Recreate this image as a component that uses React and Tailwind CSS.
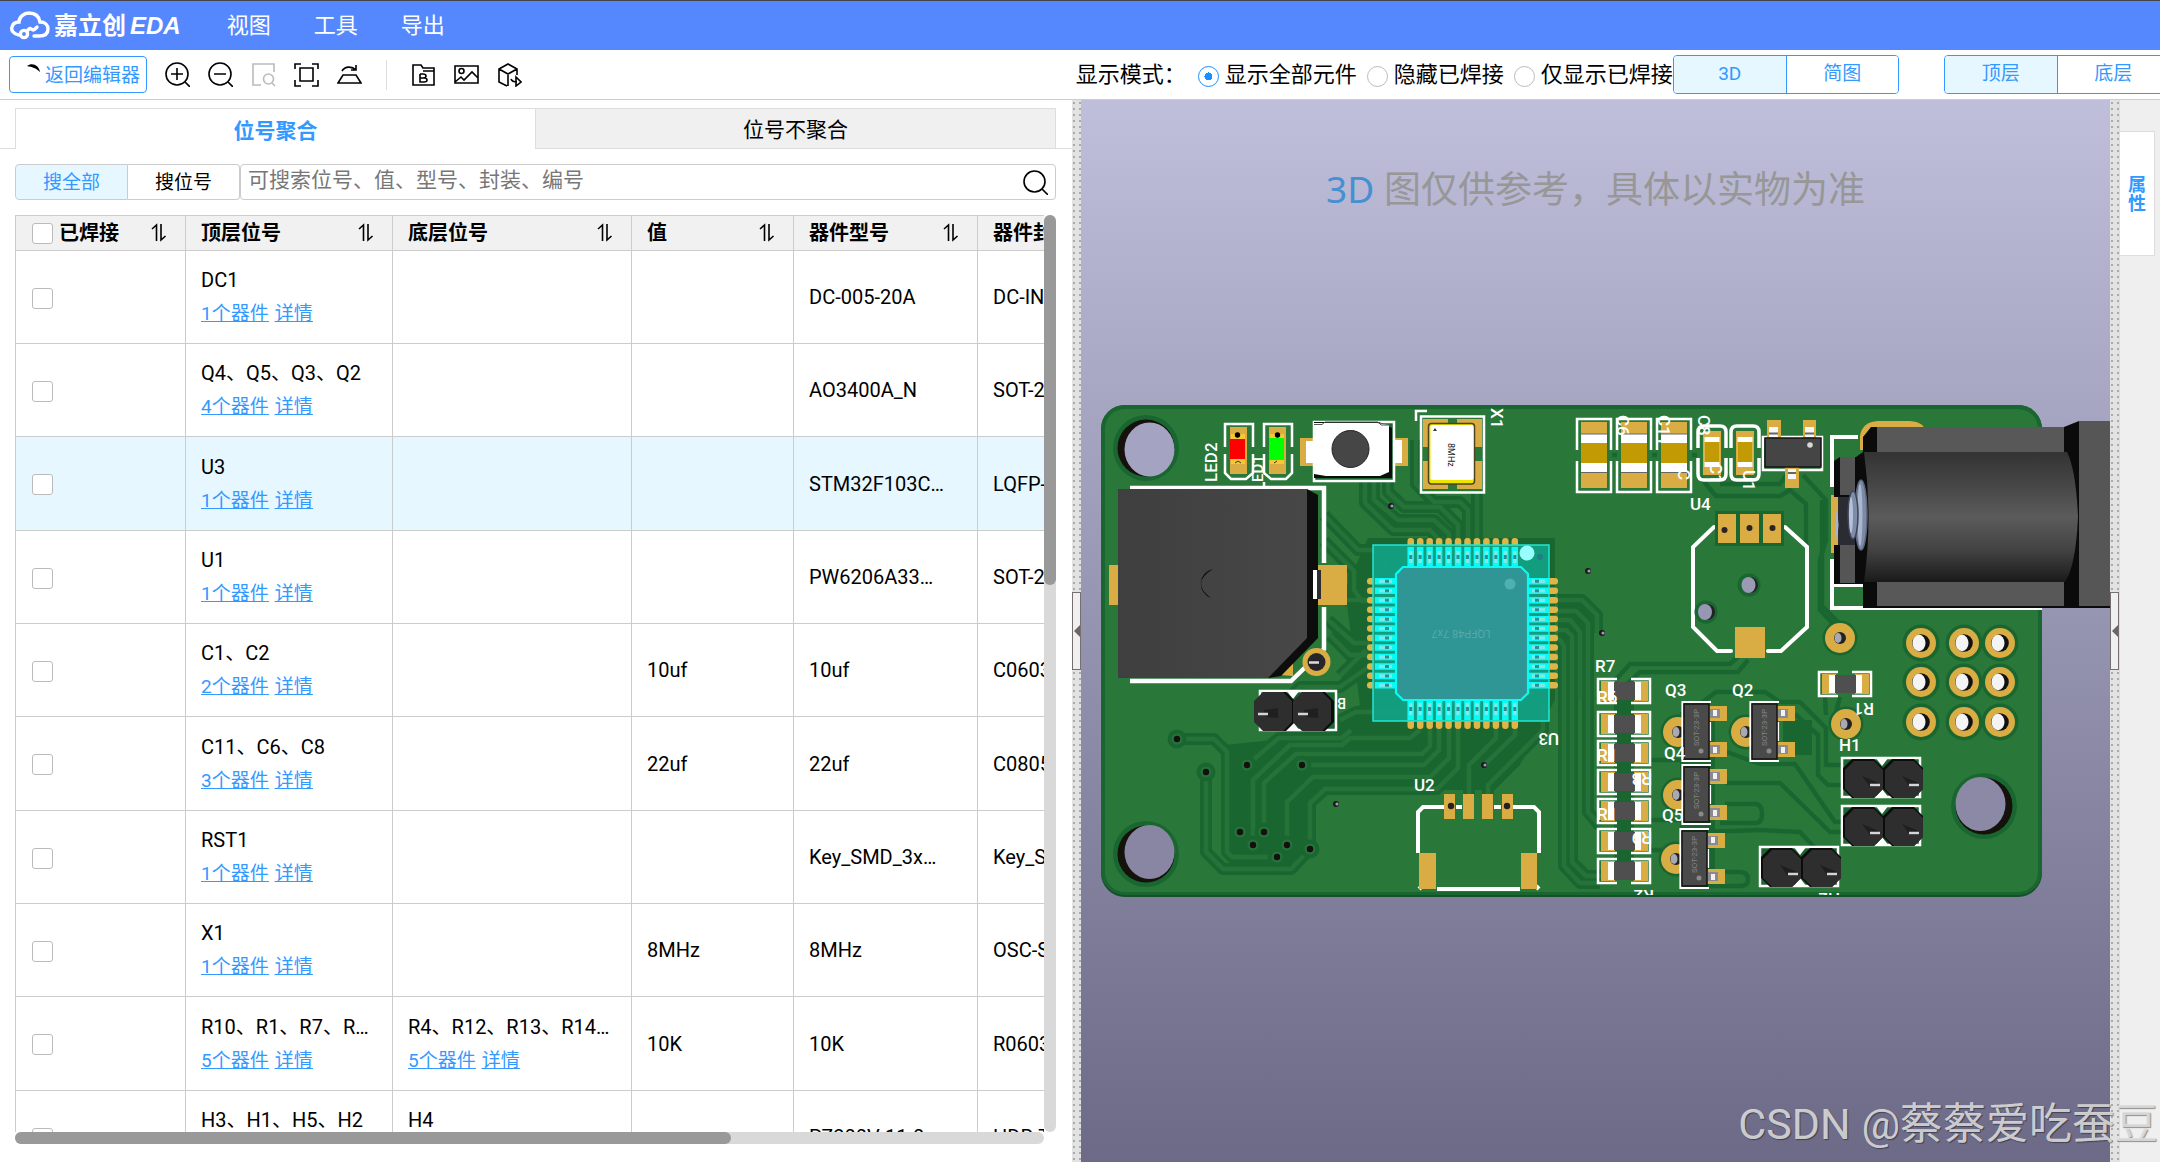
import React, { useState } from 'react';

const GOLD = '#d9ad43';
const DARK = '#1a6630';
const SILK = '#ffffff';

const rows = [
    { top: 'DC1', topCount: 1, value: '', model: 'DC-005-20A', pack: 'DC-IN-TH' },
    { top: 'Q4、Q5、Q3、Q2', topCount: 4, value: '', model: 'AO3400A_N', pack: 'SOT-23-3' },
    { top: 'U3', topCount: 1, value: '', model: 'STM32F103C…', pack: 'LQFP-48', active: true },
    { top: 'U1', topCount: 1, value: '', model: 'PW6206A33…', pack: 'SOT-23-3' },
    { top: 'C1、C2', topCount: 2, value: '10uf', model: '10uf', pack: 'C0603' },
    { top: 'C11、C6、C8', topCount: 3, value: '22uf', model: '22uf', pack: 'C0805' },
    { top: 'RST1', topCount: 1, value: '', model: 'Key_SMD_3x…', pack: 'Key_SMD' },
    { top: 'X1', topCount: 1, value: '8MHz', model: '8MHz', pack: 'OSC-SMD' },
    { top: 'R10、R1、R7、R…', topCount: 5, bottom: 'R4、R12、R13、R14…', bottomCount: 5, value: '10K', model: '10K', pack: 'R0603' },
    { top: 'H3、H1、H5、H2', topCount: 4, bottom: 'H4', bottomCount: 1, value: '', model: 'PZ200V-11-0…', pack: 'HDR-TH' },
];

const columns = ['顶层位号', '底层位号', '值', '器件型号', '器件封装'];

const Icon = ({ children, className = '' }) => (
    <svg viewBox="0 0 25 25" className={`size-[25px] ${className}`} fill="none" stroke="currentColor" strokeWidth="1.6" aria-hidden="true">
        {children}
    </svg>
);

const Logo = () => (
    <a href="#home" className="flex items-center gap-1 text-white">
        <svg viewBox="0 0 40 30" className="h-[30px] w-10" fill="none" stroke="white" strokeWidth="3.4" strokeLinecap="round" aria-hidden="true">
            <path d="M9 24 C3 23 1 19 2 16 C3 12 6 11 9 11 C9 6 14 2 19 2 C25 2 29 5 30 11 C35 11 38 14 38 18 C38 23 34 25 29 25 L24 25" />
            <circle cx="14" cy="23" r="3.6" />
            <path d="M17 20 L19 18 C21 16 22 21 25 18 L27 16" />
        </svg>
        <span className="text-[24px] leading-8 font-bold">
            嘉立创<span className="ml-1 font-['Liberation_Sans'] italic">EDA</span>
        </span>
    </a>
);

const Header = () => (
    <header className="flex h-[50px] shrink-0 items-center border-t border-[#444] bg-[#5588ff] pl-2.5">
        <Logo />
        <nav className="ml-[46px] flex gap-[43px] text-[22px] text-white">
            <a href="#view">视图</a>
            <a href="#tools">工具</a>
            <a href="#export">导出</a>
        </nav>
    </header>
);

const Segmented = ({ label, options, value, onChange }) => (
    <div role="group" aria-label={label} className="flex h-[39px] shrink-0 overflow-hidden rounded border border-[#3399ff] text-[19px] text-[#3399ff]">
        {options.map((option) => (
            <button
                key={option}
                type="button"
                onClick={() => onChange(option)}
                className={`w-28 border-l border-[#3399ff] first:border-l-0 ${option === value ? 'bg-[#e6f7ff]' : 'bg-white'}`}
            >
                {option}
            </button>
        ))}
    </div>
);

const Toolbar = () => {
    const [mode, setMode] = useState('显示全部元件');
    const [view, setView] = useState('3D');
    const [layer, setLayer] = useState('顶层');

    return (
        <div className="flex h-[50px] shrink-0 items-center overflow-hidden border-b border-[#ccc] bg-white">
            <div className="flex w-[49.8%] shrink-0 items-center gap-[18px] pl-[9px]">
                <button type="button" className="flex h-[37px] w-[138px] items-center justify-end rounded border border-[#3399ff] pt-1 pr-1.5 text-[19px] whitespace-nowrap text-[#3399ff]">
                    <svg viewBox="0 0 14 14" className="mr-1 size-3.5 shrink-0 -translate-y-2" fill="black" aria-hidden="true">
                        <path d="M0 4 C5 0 12 3 13 10 C9 6 5 5 0 4 Z" />
                    </svg>
                    返回编辑器
                </button>
                <button type="button" aria-label="放大">
                    <Icon><circle cx="12" cy="12" r="11" /><path d="M12 6v12M6 12h12M20 20l5 5" /></Icon>
                </button>
                <button type="button" aria-label="缩小">
                    <Icon><circle cx="12" cy="12" r="11" /><path d="M6 12h12M20 20l5 5" /></Icon>
                </button>
                <button type="button" aria-label="框选缩放" disabled>
                    <Icon className="text-[#bbb]"><path d="M10 23H2V2h21v8" /><circle cx="17.500" cy="17" r="5" /><path d="M21 21l3 3" /></Icon>
                </button>
                <button type="button" aria-label="适应全部">
                    <Icon><path d="M1 7V2h6M18 2h6v5M24 18v6h-6M7 24H1v-6M6 6h13v13H6z" /></Icon>
                </button>
                <button type="button" aria-label="翻转">
                    <Icon><path d="M6 13h13l5 8H1zM5 9c3-5 10-5 14-1M19 3v5h-5" /></Icon>
                </button>
                <span className="mx-1.5 h-[30px] w-px bg-[#ddd]" />
                <button type="button" aria-label="导出BOM">
                    <Icon><path d="M2 23V3h8l2 3h11v17zM12 9h11M9 12v8h4q3 0 3-2t-3-2H9m0-4h3q3 0 3 2t-3 2" /></Icon>
                </button>
                <button type="button" aria-label="导出图片">
                    <Icon><path d="M1 4h23v17H1zM1 20l6-5 3 3 8-8 6 6" /><circle cx="7.500" cy="9" r="2.500" /></Icon>
                </button>
                <button type="button" aria-label="导出3D">
                    <Icon><path d="M10 24l-8-4V7l9-5 9 5v6M2 7l9 5 9-5M11 12v12M14 17q1 3 6 3M19 15l5 5-5 4z" /></Icon>
                </button>
            </div>
            <fieldset className="flex shrink-0 items-center text-[22px] whitespace-nowrap text-black">
                <legend className="float-left mr-3">显示模式：</legend>
                {['显示全部元件', '隐藏已焊接', '仅显示已焊接'].map((item) => (
                    <label key={item} className="flex items-center gap-1.5 pr-2.5 last:pr-0">
                        <input
                            type="radio"
                            name="mode"
                            checked={mode === item}
                            onChange={() => setMode(item)}
                            className="mt-1 size-[21px] appearance-none rounded-full border border-[#bbb] bg-white checked:border-[#1890ff] checked:bg-[radial-gradient(circle,#1890ff_4px,white_4px)]"
                        />
                        {item}
                    </label>
                ))}
            </fieldset>
            <div className="flex shrink-0 gap-[45px]">
                <Segmented label="视图" options={['3D', '简图']} value={view} onChange={setView} />
                <Segmented label="层" options={['顶层', '底层']} value={layer} onChange={setLayer} />
            </div>
        </div>
    );
};

const SortButton = ({ label }) => (
    <button type="button" aria-label={`${label}排序`} className="mr-[18px]">
        <svg viewBox="0 0 16 20" className="h-5 w-4" fill="none" stroke="black" strokeWidth="1.6" aria-hidden="true">
            <path d="M1 6L5.500 2V18M10 1V17L14.500 13" />
        </svg>
    </button>
);

const checkbox = 'size-[21px] shrink-0 appearance-none rounded-[3px] border border-[#bbb] bg-white checked:bg-[#3399ff]';

const PartCell = ({ names, count }) => (
    <td className="border border-[#ccc] py-0 pl-[15px] align-middle whitespace-nowrap">
        {names && (
            <>
                <div className="leading-[34px]">{names}</div>
                <div className="flex gap-1.5 text-[19px] leading-[34px] text-[#3399ff] underline">
                    <a href="#parts">{count}个器件</a>
                    <a href="#detail">详情</a>
                </div>
            </>
        )}
    </td>
);

const PartsTable = () => (
    <table className="w-[1163px] table-fixed border-collapse text-[20px] text-black">
        <colgroup>
            <col className="w-[170px]" />
            <col className="w-[207px]" />
            <col className="w-[239px]" />
            <col className="w-[162px]" />
            <col className="w-[184px]" />
            <col className="w-[200px]" />
        </colgroup>
        <thead>
            <tr className="h-[35px] bg-[#f1f1f1] text-left font-bold">
                <th className="border border-[#ccc] py-0">
                    <div className="flex items-center pl-4">
                        <label className="flex flex-1 items-center gap-1.5">
                            <input type="checkbox" className={checkbox} />
                            已焊接
                        </label>
                        <SortButton label="已焊接" />
                    </div>
                </th>
                {columns.map((name) => (
                    <th key={name} className="border border-[#ccc] py-0">
                        <div className="flex items-center justify-between pl-[15px]">
                            {name}
                            <SortButton label={name} />
                        </div>
                    </th>
                ))}
            </tr>
        </thead>
        <tbody>
            {rows.map((row) => (
                <tr key={row.top} className={`h-[93px] nth-[3n]:h-[94px] ${row.active ? 'bg-[#e6f7ff]' : 'bg-white'}`}>
                    <td className="border border-[#ccc] py-0 pl-4 align-middle">
                        <input type="checkbox" aria-label={`${row.top} 已焊接`} className={`${checkbox} mt-0.5 block`} />
                    </td>
                    <PartCell names={row.top} count={row.topCount} />
                    <PartCell names={row.bottom} count={row.bottomCount} />
                    <td className="border border-[#ccc] py-0 pl-[15px]">{row.value}</td>
                    <td className="border border-[#ccc] py-0 pl-[15px] whitespace-nowrap">{row.model}</td>
                    <td className="border border-[#ccc] py-0 pl-[15px] whitespace-nowrap">{row.pack}</td>
                </tr>
            ))}
        </tbody>
    </table>
);

const PartsPanel = () => (
    <section className="flex w-[49.63%] shrink-0 flex-col bg-white pt-2">
        <div role="tablist" className="flex h-[41px] shrink-0 text-[21px]">
            <span className="w-[15px] border-b border-[#ddd]" />
            <button type="button" role="tab" aria-selected="true" className="flex-1 border-t border-l border-[#ddd] pt-1.5 font-bold text-[#3399ff]">
                位号聚合
            </button>
            <button type="button" role="tab" aria-selected="false" className="flex-1 border border-[#ddd] bg-[#f0f0f0] pt-1 text-black">
                位号不聚合
            </button>
            <span className="w-4 border-b border-[#ddd]" />
        </div>
        <div className="mt-[15px] mr-4 ml-[15px] flex h-9 shrink-0 text-[19px]">
            <button type="button" className="w-[113px] rounded-l border border-[#ccc] bg-[#e6f7ff] pt-0.5 text-[#3399ff]">搜全部</button>
            <button type="button" className="w-[112px] rounded-r border border-l-0 border-[#ccc] pt-0.5 text-black">搜位号</button>
            <div className="flex flex-1 items-center rounded border border-[#ccc] pr-[7px] pl-[7px]">
                <input
                    type="text"
                    aria-label="搜索"
                    placeholder="可搜索位号、值、型号、封装、编号"
                    className="flex-1 pb-0.5 text-[21px] placeholder:text-[#777] focus:outline-none"
                />
                <button type="button" aria-label="搜索">
                    <Icon className="text-black"><circle cx="11.500" cy="11.500" r="10.500" /><path d="M19 19l6 6" /></Icon>
                </button>
            </div>
        </div>
        <div className="mt-[15px] mr-4 mb-[18px] ml-[15px] flex min-h-0 flex-1 flex-col">
            <div className="flex min-h-0 flex-1">
                <div className="min-w-0 flex-1 overflow-hidden">
                    <PartsTable />
                </div>
                <div className="w-3 shrink-0 rounded-full bg-[#d9d9d9]">
                    <div className="h-[40.4%] rounded-full bg-[#999]" />
                </div>
            </div>
            <div className="mr-3 h-3 shrink-0 rounded-full bg-[#d9d9d9]">
                <div className="h-full w-[69.6%] rounded-full bg-[#999]" />
            </div>
        </div>
    </section>
);

const Splitter = () => (
    <div className="flex w-[9px] shrink-0 items-center bg-[#e2e2e2] bg-[radial-gradient(#aaa_1px,transparent_1px)] bg-[length:6px_6px] bg-[position:-1px_0]">
        <button type="button" aria-label="折叠面板" className="flex h-[78px] w-full items-center justify-center border border-[#776f6f] bg-[#f0f0f0]">
            <svg viewBox="0 0 6 12" className="h-3 w-1.5" fill="#6f6464" aria-hidden="true"><path d="M6 0V12L0 6Z" /></svg>
        </button>
    </div>
);

// x, y, width, height
const Pads = ({ list, fill = GOLD }) => list.map(([x, y, w, h]) => (
    <rect key={`${x}-${y}`} x={x} y={y} width={w} height={h} fill={fill} />
));

const Ring = ({ x, y, hole = '#f4f4f4' }) => (
    <g>
        <circle cx={x} cy={y} r="18.500" fill={DARK} />
        <circle cx={x} cy={y} r="15" fill={GOLD} />
        <circle cx={x} cy={y} r="8.800" fill="#111" />
        <ellipse cx={x - 2} cy={y} rx="6.500" ry="8.300" fill={hole} />
    </g>
);

const SmallRing = ({ x, y }) => (
    <g>
        <circle cx={x} cy={y} r="17.500" fill={DARK} />
        <circle cx={x} cy={y} r="15" fill={GOLD} />
        <circle cx={x} cy={y} r="6" fill="#222" />
        <ellipse cx={x - 2} cy={y} rx="3.500" ry="5" fill="#a9a9b4" />
    </g>
);

const MountHole = ({ x, y, shift, tilt, fill }) => (
    <g>
        <circle cx={x} cy={y} r="33" fill={DARK} />
        <circle cx={x} cy={y} r="28.500" fill="#15110b" />
        <ellipse cx={x + shift} cy={y + tilt} rx="25" ry="27" fill={fill} />
    </g>
);

const Cap = ({ x }) => (
    <g>
        <path d={`M${x + 1} 450V419H${x + 35}V450M${x + 1} 461V492H${x + 35}V461`} fill="none" stroke={SILK} strokeWidth="2.500" />
        <rect x={x + 5} y="422" width="26" height="66" fill={GOLD} />
        <rect x={x + 5} y="434" width="26" height="38" fill="white" />
        <rect x={x + 5} y="443" width="26" height="20" fill="#c29a04" />
        <path d={`M${x + 5} 472.500H${x + 31}M${x + 5} 434H${x + 31}`} stroke="#666" strokeWidth="1.200" />
    </g>
);

const SmallCap = ({ x }) => (
    <g>
        <path d={`M${x + 1} 448V432Q${x + 1} 426 ${x + 7} 426H${x + 23}Q${x + 29} 426 ${x + 29} 432V448M${x + 1} 458V474Q${x + 1} 480 ${x + 7} 480H${x + 23}Q${x + 29} 480 ${x + 29} 474V458`} fill="none" stroke={SILK} strokeWidth="3.500" />
        <rect x={x + 6} y="431" width="18" height="44" fill={GOLD} />
        <rect x={x + 7.5} y="437" width="15" height="30" fill="white" />
        <rect x={x + 7.5} y="442" width="15" height="20" fill="#c29a04" />
    </g>
);

const Resistor = ({ x, y }) => (
    <g>
        <path d={`M${x + 20} ${y + 1}H${x + 1}V${y + 25}H${x + 20}M${x + 34} ${y + 1}H${x + 53}V${y + 25}H${x + 34}`} fill="none" stroke={SILK} strokeWidth="2.500" />
        <rect x={x + 4} y={y + 3} width="14" height="20" fill={GOLD} />
        <rect x={x + 37} y={y + 3} width="14" height="20" fill={GOLD} />
        <rect x={x + 11} y={y + 4} width="33" height="18" fill="white" />
        <rect x={x + 17} y={y + 4} width="21" height="18" fill="#4f4f4f" />
    </g>
);

const Mosfet = ({ x, y }) => (
    <g>
        <SmallRing x={x - 6} y={y + 28} />
        <rect x={x + 25} y={y + 2} width="18" height="15" fill={GOLD} />
        <rect x={x + 25} y={y + 38} width="18" height="15" fill={GOLD} />
        <path d={`M${x + 27} ${y - 2}H${x - 1.500}V${y + 57}H${x + 27}M${x + 26} ${y + 18}V${y + 37}`} fill="none" stroke={SILK} strokeWidth="2.200" />
        <rect x={x + 26} y={y + 5} width="10" height="9" fill="#8a8a92" />
        <rect x={x + 29} y={y + 6} width="4" height="6" fill="#f2f2f2" />
        <rect x={x + 26} y={y + 41} width="10" height="9" fill="#8a8a92" />
        <rect x={x + 29} y={y + 43} width="4" height="6" fill="#f2f2f2" />
        <rect x={x} y={y} width="25" height="55" fill="#4a4a4a" stroke="#161616" strokeWidth="1.600" />
        <circle cx={x + 17} cy={y + 47} r="2.500" fill="#8a8a8a" />
        <text x={x + 15} y={y + 42} transform={`rotate(-90 ${x + 15} ${y + 42})`} fontSize="8" fill="#858585">SOT-23-3P</text>
    </g>
);

const octagon = (x, y, w, h) => `M${x + 9} ${y}H${x + w - 9}L${x + w} ${y + 9}V${y + h - 9}L${x + w - 9} ${y + h}H${x + 9}L${x} ${y + h - 9}V${y + 9}Z`;

const PinHeader = ({ x, y }) => (
    <g>
        <rect x={x + 1} y={y + 1} width="78" height="39" fill={DARK} stroke={SILK} strokeWidth="2.500" />
        <path d={`M${x + 34} ${y}h14l-7 9zM${x + 34} ${y + 41}h14l-7 -9z`} fill="white" />
        <path d={octagon(x + 2, y + 2, 40, 39)} fill="#0c0c0c" />
        <path d={octagon(x + 42, y + 2, 40, 39)} fill="#0c0c0c" />
        <path d={octagon(x + 4, y + 4, 38, 37)} fill="#2e2e2e" />
        <path d={octagon(x + 44, y + 4, 38, 37)} fill="#2e2e2e" />
        <path d={`M${x + 21} ${y + 19}l17 7v4h-9zM${x + 61} ${y + 19}l17 7v4h-9z`} fill="#1f1f1f" />
        <path d={`M${x + 29} ${y + 28}h10M${x + 68} ${y + 28}h10`} stroke="#d5d5d5" strokeWidth="2.500" />
    </g>
);

const routes = [
    'M1177 739H1214L1227 752V852L1232 857H1277',
    'M1206 772V852L1223 869H1291L1310 849V803L1325 789H1437L1458 768V728',
    'M1247 765L1279 738H1342L1351 730',
    'M1253 845V780L1290 745H1342L1350 738H1410L1420 730',
    'M1264 832V783L1296 754H1422L1430 746V728',
    'M1302 765H1424L1439 750V728',
    'M1287 845V802L1313 777H1430L1449 758V728',
    'M1469 794V765L1496 738V728',
    'M1484 765L1515 735V728',
    'M1488 794V785L1543 730V700',
    'M1365 482V503L1393 530H1430L1439 540',
    'M1374 482V500L1398 520H1434L1449 534V540',
    'M1388 482V492L1404 507H1440L1458 525V540',
    'M1416 440V484L1434 502H1460L1468 510V540',
    'M1477 489V540',
    'M1324 515L1358 550H1372L1388 566',
    'M1324 541L1354 571V590L1362 601H1370',
    'M1345 600H1370',
    'M1328 620L1354 643H1370',
    'M1330 635L1350 655H1370',
    'M1340 676L1366 650',
    'M1290 697L1300 687H1340L1370 666',
    'M1340 720L1356 712H1400',
    'M1558 600H1582L1597 615V633',
    'M1558 611H1576L1588 623V655',
    'M1558 620H1570L1580 632V700',
    'M1558 630H1566L1572 636V862L1586 876H1610',
    'M1558 640H1560L1564 646V866L1580 883H1600',
    'M1588 655V812L1600 826',
];

const grooves = [
    'M1597 700L1630 664H1730L1740 655',
    'M1610 700L1640 672H1738L1748 660',
    'M1700 477L1716 496H1780L1790 490L1806 504V545',
    'M1720 484H1780L1790 470',
    'M1822 500L1822 606L1850 634',
    'M1803 475L1826 500V540L1820 560V610L1835 626',
    'M1700 704L1716 692H1765L1780 702H1800L1826 728V765H1845',
    'M1795 714L1818 735V775L1828 785H1845',
    'M1727 752L1760 764H1795L1835 822H1845',
    'M1725 783H1780L1830 832H1845',
    'M1725 804H1755Q1762 804 1762 814Q1762 823 1755 823H1720',
    'M1700 832L1760 830L1800 832L1815 848',
    'M1706 872H1740Q1748 872 1748 880Q1748 886 1740 886H1700',
    'M1825 697L1826 715M1840 697L1836 712',
    'M1612 455H1617M1652 455H1657M1692 455H1697',
    'M1650 760H1690M1650 820H1690M1650 850H1680',
];

const vias = [
    [1177, 739], [1206, 772], [1247, 765], [1302, 765], [1240, 832], [1264, 832], [1253, 845],
    [1287, 845], [1277, 857], [1310, 849],
];

// drill holes without a trace on this layer
const drills = [[1336, 804], [1484, 765], [1391, 506], [1588, 571], [1602, 633]];

const pins = Array.from({ length: 12 }, (_, i) => i * 9.46);

const Mcu = () => (
    <g>
        {pins.map((p) => (
            <g key={p} fill="#dfb548">
                <rect x={1407.5 + p} y="538" width="6.500" height="191" rx="3" />
                <rect x="1367" y={578 + p} width="191" height="6.500" rx="3" />
            </g>
        ))}
        <rect x="1373" y="545" width="176" height="176" fill="#12a184" fillOpacity="0.93" stroke="#1fe8d8" strokeWidth="1.500" />
        {pins.map((p) => (
            <g key={p}>
                <path d={`M${1410.7 + p} 547V568M${1410.7 + p} 699V720M1375 ${581.3 + p}H1396M1528 ${581.3 + p}H1549`} stroke="#08fbf5" strokeWidth="6.500" />
                <path d={`M${1410.7 + p} 551V563M${1410.7 + p} 703V715M1379 ${581.3 + p}H1392M1532 ${581.3 + p}H1545`} stroke="#7aeaea" strokeWidth="3.500" />
                <path d={`M${1410.7 + p} 555V559M${1410.7 + p} 707V711M1385 ${581.3 + p}H1389M1535 ${581.3 + p}H1539`} stroke="#2b8f98" strokeWidth="3" />
            </g>
        ))}
        <path d="M1403 567H1521L1528 574V693L1521 700H1403L1396 693V574Z" fill="#309595" stroke="#08fbf5" strokeWidth="2.200" />
        <circle cx="1527" cy="553" r="7.500" fill="#98ffff" />
        <circle cx="1540" cy="557" r="3" fill="#227f86" />
        <circle cx="1510" cy="584" r="5.500" fill="#4fb0b0" />
        <text x="1461" y="633" transform="rotate(180 1461 633)" textAnchor="middle" dominantBaseline="middle" fontSize="11" fill="#58aaaa">LQFP48 7x7</text>
    </g>
);

const DcJack = () => (
    <g>
        <path d="M1860 450V436Q1862 422 1878 421H1910Q1924 422 1926 432V450Z" fill={GOLD} />
        <path d="M1858 437H1832V487M1832 559V608H2042M1832 585H1866" fill="none" stroke={SILK} strokeWidth="4" />
        <rect x="1831" y="495" width="8" height="58" fill={GOLD} />
        <path d="M1834 461L1840 457H1856L1863 452V437L1871 427H2064L2079 421H2110V608H1863V584H1834V545H1838V497H1834Z" fill="#0b0b0b" />
        <rect x="1840" y="457" width="15" height="38" fill="#555" />
        <rect x="1840" y="545" width="15" height="38" fill="#555" />
        <path d="M1838 497H1855V545H1838Z" fill="#2b2c33" />
        <path d="M1836 510Q1841 524 1836 540Z" fill="#a9b5cf" />
        <ellipse cx="1861" cy="515" rx="6" ry="35" fill="#7d8aa5" stroke="#5c667c" strokeWidth="1.500" />
        <ellipse cx="1860" cy="515" rx="2.500" ry="31" fill="#a9b6d0" />
        <ellipse cx="1853" cy="515" rx="5" ry="24" fill="#7f8ca8" stroke="#3e4656" strokeWidth="1.500" />
        <ellipse cx="1851" cy="515" rx="2" ry="18" fill="#b5c2dc" />
        <rect x="1877" y="427" width="187" height="25" fill="#585858" />
        <rect x="1877" y="582" width="187" height="24" fill="#585858" />
        <path d="M1864 452H2067Q2076 470 2078 517Q2076 565 2065 582H1864Q1873 517 1864 452Z" fill="url(#barrel)" />
        <rect x="2079" y="421" width="31" height="185" fill="#565656" />
    </g>
);

const Board = () => (
    <svg viewBox="1081 100 1029 1062" preserveAspectRatio="xMidYMid slice" className="absolute inset-0 h-full w-full font-['Roboto']" role="img" aria-label="PCB 3D">
        <defs>
            <linearGradient id="barrel" x1="0" y1="0" x2="0" y2="1">
                <stop offset="0" stopColor="#333" />
                <stop offset="0.250" stopColor="#464646" />
                <stop offset="0.500" stopColor="#5b5b5b" />
                <stop offset="0.750" stopColor="#434343" />
                <stop offset="1" stopColor="#1a1a1a" />
            </linearGradient>
            <linearGradient id="buzzer" x1="0" y1="0" x2="1" y2="0">
                <stop offset="0" stopColor="#3f3f3f" />
                <stop offset="1" stopColor="#474747" />
            </linearGradient>
            <clipPath id="outline">
                <rect x="1101" y="405" width="941" height="490" rx="24" />
            </clipPath>
        </defs>
        <rect x="1101" y="405" width="941" height="492" rx="24" fill="#14502a" />
        <rect x="1101" y="405" width="941" height="490" rx="24" fill={DARK} />
        <rect x="1105" y="409" width="933" height="483" rx="20" fill="#29783a" />

        <path d="M1345 590L1368 538H1555V700L1520 765L1495 790H1330L1312 800V845L1290 866H1230L1225 745L1290 738L1360 705Z" fill={DARK} />
        <path d="M1614 700H1634V880H1614ZM1680 712H1715V880H1680ZM1783 720H1812V755H1783Z" fill={DARK} />
        <g fill="none" stroke={DARK} strokeWidth="12" strokeLinejoin="round">
            {routes.map((d) => <path key={d} d={d} />)}
        </g>
        <g fill="none" stroke="#26733a" strokeWidth="4.500" strokeLinejoin="round">
            {routes.map((d) => <path key={d} d={d} />)}
        </g>
        <g fill="none" stroke={DARK} strokeWidth="4.500" strokeLinejoin="round">
            {grooves.map((d) => <path key={d} d={d} />)}
        </g>
        {vias.map(([x, y]) => (
            <g key={`${x}-${y}`}>
                <circle cx={x} cy={y} r="9.500" fill={DARK} />
                <circle cx={x} cy={y} r="5.500" fill="#26733a" />
                <circle cx={x} cy={y} r="3.200" fill="#15100f" />
            </g>
        ))}
        {drills.map(([x, y]) => (
            <g key={`${x}-${y}`}>
                <circle cx={x} cy={y} r="3" fill="#1c1718" />
                <circle cx={x + 1} cy={y} r="1.600" fill="#9d9bb9" />
            </g>
        ))}

        <MountHole x={1146} y={448} shift={3.5} tilt={1.5} fill="#a4a3c1" />
        <MountHole x={1146} y={854} shift={3.5} tilt={-2} fill="#8886a3" />
        <MountHole x={1984} y={806} shift={-3.5} tilt={-2} fill="#8b89a6" />

        {/* buzzer */}
        <path d="M1130 488H1324V563M1324 607V649L1291 681H1130" fill="none" stroke={SILK} strokeWidth="4.500" />
        <Pads list={[[1109, 565, 12, 40], [1318, 565, 29, 40]]} />
        <path d="M1280 675L1293 662V676Z" fill={GOLD} />
        <path d="M1307 489L1318 495V638L1281 676L1268 678Z" fill="#0d0d0d" />
        <path d="M1118 489H1307V638L1268 678H1118Z" fill="url(#buzzer)" />
        <path d="M1213 569A15 15 0 0 0 1211 598Q1190 583 1213 569Z" fill="#0c0c0c" />
        <rect x="1313" y="570" width="4" height="29" fill="white" />
        <rect x="1317" y="570" width="4" height="29" fill="#2d2d2d" />
        <circle cx="1316.500" cy="662" r="14" fill={GOLD} />
        <circle cx="1316.500" cy="662" r="9" fill="#26262a" />
        <path d="M1309 662.500h10" stroke="#ddd" strokeWidth="2.500" />

        {/* left pin header */}
        <rect x="1260" y="691" width="76" height="39" fill={DARK} stroke={SILK} strokeWidth="2.500" />
        <path d="M1286 690h14l-7 9zM1286 731h14l-7 -9z" fill="white" />
        <path d={octagon(1256, 692, 39, 39)} fill="#0c0c0c" />
        <path d={octagon(1295, 692, 39, 39)} fill="#0c0c0c" />
        <path d={octagon(1254, 692, 38, 39)} fill="#2e2e2e" />
        <path d={octagon(1293, 692, 38, 39)} fill="#2e2e2e" />
        <path d="M1264 710l14 -2v10l-12 -1zM1304 710l14 -2v10l-12 -1z" fill="#202020" />
        <path d="M1258 714h10M1298 714h10" stroke="#d5d5d5" strokeWidth="2.500" />

        {/* leds */}
        <path d="M1225 447V424H1253V447M1225 454V473L1231 479H1246L1253 473V454M1264 447V424H1292V447M1264 454V473L1271 479H1286L1292 473V454M1264 482V488" fill="none" stroke={SILK} strokeWidth="2.500" />
        <Pads list={[[1230, 427, 17, 47], [1269, 427, 17, 47]]} />
        <Pads list={[[1231, 434, 14, 30], [1270, 434, 14, 30]]} fill="#f5c935" />
        <rect x="1230" y="439" width="15" height="20" fill="#ff0000" />
        <rect x="1269" y="438" width="15" height="22" fill="#00ff00" />
        <circle cx="1237.500" cy="435" r="2.700" fill="black" />
        <circle cx="1277.500" cy="435" r="2.700" fill="black" />
        <path d="M1235 463l3 -2l3 2M1274 463l3 -2" fill="none" stroke="#333" />

        {/* reset key */}
        <Pads list={[[1300, 438, 14, 28], [1394, 438, 14, 28]]} />
        <Pads list={[[1306, 441, 8, 22], [1392, 440, 10, 23]]} fill="white" />
        <rect x="1314" y="422" width="80" height="59" fill={DARK} stroke={SILK} strokeWidth="2.500" />
        <path d="M1314 422H1379L1392 428V478H1314Z" fill="#0d0d0d" />
        <path d="M1314 423H1377L1389 425V472L1380 476H1326L1314 474Z" fill="white" />
        <path d="M1314 424.500H1322L1325 422H1378L1381 425H1390" fill="none" stroke="#555" />
        <circle cx="1350.500" cy="449" r="18.500" fill="#464646" stroke="#222" />

        {/* crystal */}
        <path d="M1416 421V411H1427" fill="none" stroke={SILK} strokeWidth="2.500" />
        <rect x="1421" y="416.500" width="63" height="76" fill="#29783a" stroke={SILK} strokeWidth="2.500" />
        <Pads list={[[1423, 419, 25, 28], [1457, 419, 25, 28], [1423, 461, 25, 28], [1457, 461, 25, 28]]} />
        <rect x="1428.500" y="423.500" width="46" height="60.500" rx="3" fill="#efe400" stroke="#4b4420" strokeWidth="1.500" />
        <rect x="1430.500" y="425" width="43" height="55" rx="2" fill="white" />
        <path d="M1433 431l2 -3l2 3z" fill="#333" />
        <text x="1448" y="443" transform="rotate(90 1448 443)" fontSize="9" fill="#222">8MHz</text>

        <Cap x={1576} />
        <Cap x={1616} />
        <Cap x={1656} />
        <SmallCap x={1697} />
        <SmallCap x={1730} />

        {/* regulator */}
        <rect x="1763" y="437" width="59" height="33" fill="none" stroke={SILK} strokeWidth="2.500" />
        <Pads list={[[1767, 420, 14, 20], [1803, 420, 13, 20], [1785, 467, 14, 21]]} />
        <Pads list={[[1769, 427, 9, 10], [1805, 427, 9, 10], [1788, 469, 8, 10]]} fill="#f7f7f7" />
        <path d="M1769 433.500h9M1805 433.500h9M1788 473h8" stroke="#666" strokeWidth="2" />
        <rect x="1765" y="438" width="56" height="29" fill="#454545" stroke="#151515" strokeWidth="1.500" />
        <circle cx="1810" cy="445" r="2.800" fill="#d6d6d6" />

        <DcJack />

        {/* U4 footprint */}
        <path d="M1714 527L1693 547V627L1717 651H1731M1785 527L1807 547V627L1781 651H1768" fill="none" stroke={SILK} strokeWidth="4" strokeLinecap="round" />
        <Pads list={[[1715, 511, 69, 35]]} fill={DARK} />
        <Pads list={[[1718, 514, 18, 29], [1740, 514, 19, 29], [1763, 514, 18, 29], [1735, 627, 30, 31]]} />
        <g fill="#2b2325">
            <circle cx="1724.500" cy="530" r="3" />
            <circle cx="1749.500" cy="528" r="3" />
            <circle cx="1772.500" cy="528" r="3" />
        </g>
        <circle cx="1749" cy="585" r="11.500" fill={DARK} />
        <circle cx="1750" cy="585" r="8" fill="#222" />
        <ellipse cx="1748.500" cy="585" rx="7" ry="8" fill="#9a99b6" />
        <circle cx="1706" cy="612" r="11.500" fill={DARK} />
        <circle cx="1707" cy="612" r="8" fill="#222" />
        <ellipse cx="1705" cy="612" rx="7" ry="8" fill="#9796b3" />

        {[643, 682, 722].map((y) => [1921, 1964, 2000].map((x) => <Ring key={`${x}-${y}`} x={x} y={y} />))}
        <SmallRing x={1840} y={638} />
        <SmallRing x={1846} y={724} />

        {/* U2 connector */}
        <path d="M1444 807H1423L1418 812V853M1512 807H1534L1539 812V853M1456 807H1462M1494 807H1501M1437 889H1520M1419 886L1422 889M1539 886L1536 889" fill="none" stroke={SILK} strokeWidth="4" />
        <Pads list={[[1444, 794, 11, 25], [1463, 794, 11, 25], [1482, 794, 11, 25], [1502, 794, 11, 25], [1419, 853, 17, 36], [1521, 853, 16, 36]]} />
        <circle cx="1451" cy="806" r="3.200" fill="#222" />
        <circle cx="1507" cy="806" r="3.200" fill="#222" />

        {[678, 711, 740, 769, 798, 828, 858].map((y) => <Resistor key={y} x={1597} y={y} />)}
        <Resistor x={1818} y={671} />
        <Mosfet x={1684} y={704} />
        <Mosfet x={1752} y={704} />
        <Mosfet x={1684} y={767} />
        <Mosfet x={1682} y={831} />
        <PinHeader x={1841} y={757} />
        <PinHeader x={1841} y={805} />
        <PinHeader x={1759} y={846} />
        <Mcu />

        <g fill={SILK} fontSize="17" fontWeight="500" clipPath="url(#outline)">
            <text x="1690" y="510">U4</text>
            <text x="1595" y="672">R7</text>
            <text x="1665" y="696">Q3</text>
            <text x="1732" y="696">Q2</text>
            <text x="1664" y="759">Q4</text>
            <text x="1662" y="821">Q5</text>
            <text x="1839" y="751">H1</text>
            <text x="1414" y="791">U2</text>
            <text x="1597" y="703">R6</text>
            <text x="1597" y="761">R1</text>
            <text x="1597" y="820">R1</text>
            <text x="1652" y="773" transform="rotate(180 1652 773)">R8</text>
            <text x="1652" y="832" transform="rotate(180 1652 832)">R9</text>
            <text x="1654" y="890" transform="rotate(180 1654 890)">R2</text>
            <text x="1840" y="893" transform="rotate(180 1840 893)">H2</text>
            <text x="1559" y="733" transform="rotate(180 1559 733)">U3</text>
            <text x="1874" y="703" transform="rotate(180 1874 703)">R1</text>
            <text x="1217" y="482" transform="rotate(-90 1217 482)">LED2</text>
            <text x="1263" y="482" transform="rotate(-90 1263 482)" fontSize="15">ED1</text>
            <text x="1491" y="408" transform="rotate(90 1491 408)">X1</text>
            <text x="1617" y="415" transform="rotate(90 1617 415)">C6</text>
            <text x="1658" y="415" transform="rotate(90 1658 415)">C11</text>
            <text x="1698" y="415" transform="rotate(90 1698 415)">C8</text>
            <text x="1678" y="469" transform="rotate(90 1678 469)">C</text>
            <text x="1710" y="463" transform="rotate(90 1710 463)">C1</text>
            <text x="1743" y="470" transform="rotate(90 1743 470)">U1</text>
            <text x="1346" y="702" transform="rotate(180 1346 702)" fontSize="14" dominantBaseline="middle">B</text>
        </g>
    </svg>
);

const Viewer = () => (
    <main className="relative min-w-0 flex-1 overflow-hidden bg-linear-to-b from-[#bfbfdc] to-[#6c6a86]">
        <Board />
        <p className="relative mt-[62px] text-center font-['Noto_Sans','Noto_Sans_CJK_SC',sans-serif] text-[37px] leading-[54px] text-[#979797]">
            <span className="text-[#468fd2]">3D</span> 图仅供参考，具体以实物为准
        </p>
    </main>
);

export default function App() {
    return (
        <div className="relative flex h-screen flex-col overflow-hidden bg-white font-['Roboto','Noto_Sans_CJK_SC',sans-serif]">
            <Header />
            <Toolbar />
            <div className="flex min-h-0 flex-1">
                <PartsPanel />
                <Splitter />
                <Viewer />
                <Splitter />
                <aside className="w-[41px] shrink-0 border-l border-[#ddd] bg-[#efefef] pt-[31px]">
                    <button type="button" className="flex h-[125px] w-[35px] items-center justify-center border border-l-0 border-[#ddd] bg-white px-2 text-[18px] leading-[19px] font-bold text-[#3399ff]">
                        属性
                    </button>
                </aside>
            </div>
            <p className="pointer-events-none absolute right-0.5 bottom-1.5 text-[43px] leading-[64px] text-[#dedede]/90 text-shadow-[1px_1px_1px_#0006]">
                CSDN @蔡蔡爱吃蚕豆
            </p>
        </div>
    );
}
